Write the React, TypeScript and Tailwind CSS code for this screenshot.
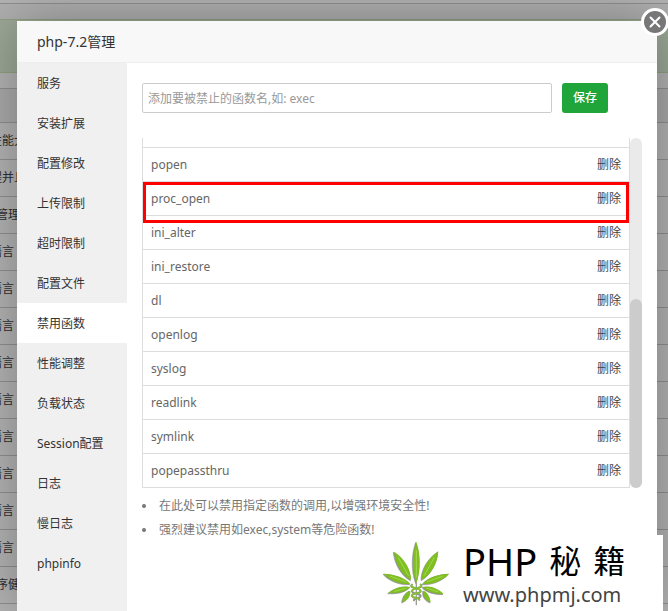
import { useState } from 'react'
import { clsx } from 'clsx'

const BACK_ROWS = [
  { text: '性能大', wide: false },
  { text: '程并且', wide: false },
  { text: '管理', wide: true },
  { text: '语言', wide: false },
  { text: '语言', wide: false },
  { text: '语言', wide: false },
  { text: '语言', wide: false },
  { text: '语言', wide: false },
  { text: '语言', wide: false },
  { text: '语言', wide: false },
  { text: '语言', wide: false },
  { text: '语言', wide: false },
  { text: '序健', wide: true },
]

const MENU = [
  '服务', '安装扩展', '配置修改', '上传限制', '超时限制', '配置文件', '禁用函数',
  '性能调整', '负载状态', 'Session配置', '日志', '慢日志', 'phpinfo',
]

const FUNCTIONS = [
  'popen', 'proc_open', 'ini_alter', 'ini_restore', 'dl',
  'openlog', 'syslog', 'readlink', 'symlink', 'popepassthru',
]

const TIPS = [
  '在此处可以禁用指定函数的调用,以增强环境安全性!',
  '强烈建议禁用如exec,system等危险函数!',
]

const LEAVES = [
  'M121 28 C109 62 106 112 121 152 C136 112 133 62 121 28Z',
  'M54 58 C57 92 77 128 105 143 C106 112 84 76 54 58Z',
  'M187 57 C185 92 165 128 137 143 C136 112 157 76 187 57Z',
  'M23 124 C42 146 76 157 103 155 C88 135 53 125 23 124Z',
  'M219 124 C200 146 166 157 140 155 C154 135 189 125 219 124Z',
  'M37 182 C60 184 88 180 103 164 C80 158 53 168 37 182Z',
  'M203 185 C182 185 155 181 140 164 C162 158 188 169 203 185Z',
  'M79 210 C94 204 104 192 103 175 C89 178 80 194 79 210Z',
  'M164 210 C149 204 140 192 142 175 C154 178 162 194 164 210Z',
]

function LeafLogo() {
  return (
    <svg viewBox="15 20 210 204" className="w-[70px] h-[68px] shrink-0" aria-hidden="true">
      <g fill="#8a8d88" stroke="#979797" strokeWidth="2" strokeLinejoin="round" transform="translate(-2 2)">
        {LEAVES.map(d => <path key={d} d={d} />)}
      </g>
      <g fill="#7fbf22">
        {LEAVES.map(d => <path key={d} d={d} />)}
      </g>
      <g fill="none" stroke="#a5d84c" strokeWidth="3" strokeLinecap="round">
        <path d="M121 55V135M67 76L97 129M174 76L145 129M43 132L88 148M199 132L154 148M56 177L88 168M185 178L153 168" />
      </g>
      <path d="M121 150V219" stroke="#9ba096" strokeWidth="4" />
      <g fill="none" strokeLinecap="round">
        <path d="M108 157C96 168 134 166 134 176C134 186 108 180 108 190C108 199 130 194 130 202M134 157C146 168 108 166 108 176C108 186 134 182 134 191C134 198 112 198 114 204" stroke="#8f9689" strokeWidth="6" />
        <path d="M108 157C96 168 134 166 134 176C134 186 108 180 108 190C108 199 130 194 130 202M134 157C146 168 108 166 108 176" stroke="#86c22f" strokeWidth="5" />
      </g>
    </svg>
  )
}

function Backdrop() {
  return (
    <div className="min-h-screen bg-white text-xs text-[#444]" aria-hidden="true">
      <div className="h-1 border-b border-[#ccc]" />
      <div className="h-[15px] bg-[#fafafa]" />
      <div className="h-[54px] border-y border-[#cfe3b4] bg-[#dff0d8]" />
      <div className="h-4 border-b border-[#ccc]" />
      <div className="h-[34px] border-b border-[#ccc] bg-[#f2f2f2]" />
      {BACK_ROWS.map((row, i) => (
        <div key={i} className="h-[37px] border-b border-[#ccc] flex items-center">
          <span className={row.wide ? '-ml-1' : '-ml-2.5'}>{row.text}</span>
        </div>
      ))}
    </div>
  )
}

export default function App() {
  const [active, setActive] = useState(6)
  const [name, setName] = useState('')
  const [items, setItems] = useState(FUNCTIONS)

  const add = () => {
    if (!name.trim()) return
    setItems(prev => [...prev, name.trim()])
    setName('')
  }

  const del = (fn: string) => setItems(prev => prev.filter(f => f !== fn))

  return (
    <div className="relative h-screen overflow-hidden font-['Noto_Sans','Noto_Sans_CJK_SC',sans-serif]">
      <Backdrop />

      <div className="absolute inset-0 bg-black/30 pt-[21px] pl-[17px] pr-[11px] flex">
        <div role="dialog" aria-label="php-7.2管理"
          className="relative flex-1 min-w-0 flex flex-col bg-white shadow-[1px_1px_50px_rgba(0,0,0,0.3)]">
          <h2 className="h-[42px] shrink-0 px-5 flex items-center bg-[#f8f8f8] border-b border-[#eee] text-sm text-[#333]">
            php-7.2管理
          </h2>
          <button aria-label="关闭"
            className="absolute -top-[13px] -right-3 size-7 rounded-full border-3 border-white bg-[#777] text-white flex items-center justify-center">
            <svg viewBox="0 0 12 12" className="size-3" stroke="currentColor" strokeWidth="2" strokeLinecap="round">
              <path d="M1.5 1.5L10.5 10.5M10.5 1.5L1.5 10.5" />
            </svg>
          </button>

          <div className="flex flex-1 min-h-0">
            <nav className="w-[110px] shrink-0 bg-[#f0f0f0] flex flex-col">
              {MENU.map((label, i) => (
                <button key={label} onClick={() => setActive(i)}
                  className={clsx('h-10 shrink-0 pl-5 pt-0.5 text-left text-xs text-[#333]', i === active && 'bg-white')}>
                  {label}
                </button>
              ))}
            </nav>

            <div className="flex-1 min-w-0 px-[15px] pt-5">
              <div className="flex gap-2.5 pr-[34px]">
                <input value={name} onChange={e => setName(e.target.value)} aria-label="函数名"
                  placeholder="添加要被禁止的函数名,如: exec"
                  className="flex-1 min-w-0 h-[30px] px-[5px] border border-[#ccc] rounded-xs text-xs text-[#555] placeholder:text-[#999]" />
                <button onClick={add} className="w-[46px] h-[30px] rounded-[3px] bg-[#20a53a] text-xs font-medium text-white">
                  保存
                </button>
              </div>

              <div className="relative mt-[25px] h-[350px] flex items-stretch overflow-hidden">
                <div className="flex-1 min-w-0 border-x border-[#ddd]">
                  <table className="w-full border-separate border-spacing-0 text-xs">
                    <tbody>
                      <tr><td colSpan={2} className="h-[10px] p-0 border-b border-[#ddd]" /></tr>
                      {items.map(fn => (
                        <tr key={fn}>
                          <td className="h-[34px] px-2 pt-px pb-0 border-b border-[#ddd] text-[#666]">{fn}</td>
                          <td className="h-[34px] px-2 pt-px pb-0 border-b border-[#ddd] text-right">
                            <button onClick={() => del(fn)} className="text-[#444]">删除</button>
                          </td>
                        </tr>
                      ))}
                    </tbody>
                  </table>
                </div>
                <div className="w-3 rounded-full bg-[#eaeaea] flex flex-col justify-end">
                  <div className="h-[189px] rounded-full bg-[#ccc]" />
                </div>
                {/* highlighted row */}
                <div className="absolute top-11 left-px right-[13px] h-[41px] border-3 border-[#f00] pointer-events-none" />
              </div>

              <ul className="mt-1.5 text-xs leading-6 text-[#777]">
                {TIPS.map(tip => (
                  <li key={tip} className="flex items-center gap-[13px]">
                    <span className="size-1 rounded-full bg-[#777]" />
                    {tip}
                  </li>
                ))}
              </ul>
            </div>
          </div>
        </div>
      </div>

      {/* watermark */}
      <div className="absolute right-[5px] bottom-0 w-[286px] h-[76px] pl-1 bg-white flex items-center gap-3">
        <LeafLogo />
        <div className="pt-1 whitespace-nowrap">
          <div className="flex items-center gap-3 h-10 text-black">
            <span className="text-[38px] leading-10">PHP</span>
            <span className="text-[32px] leading-10">秘</span>
            <span className="text-[32px] leading-10">籍</span>
          </div>
          <div className="text-[20px] leading-7 text-[#444]">www.phpmj.com</div>
        </div>
      </div>
    </div>
  )
}
